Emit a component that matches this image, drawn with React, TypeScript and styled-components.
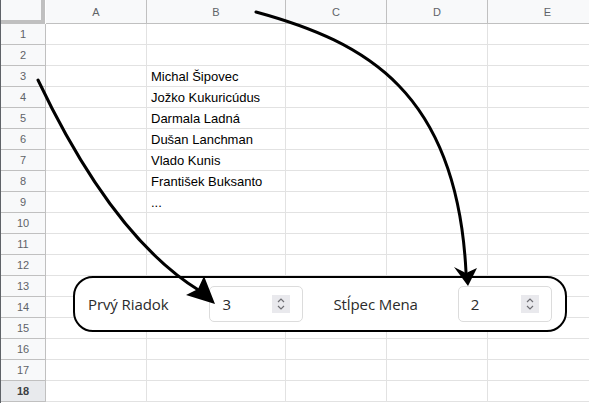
import React, { ReactElement } from 'react'
import styled, { createGlobalStyle } from 'styled-components'

const GlobalStyle = createGlobalStyle`
  html, body {
    margin: 0;
    padding: 0;
    background: #ffffff;
    overflow: hidden;
  }
`

const COLUMNS = ['A', 'B', 'C', 'D', 'E']
const ROW_COUNT = 18
const NAMES: Record<number, string> = {
  3: 'Michal Šipovec',
  4: 'Jožko Kukuricúdus',
  5: 'Darmala Ladná',
  6: 'Dušan Lanchman',
  7: 'Vlado Kunis',
  8: 'František Buksanto',
  9: '...',
}

const Stage = styled.div`
  position: relative;
  width: 589px;
  height: 403px;
  overflow: hidden;
  border-left: 1px solid #5f6368;
  box-sizing: border-box;
`

const Sheet = styled.div`
  display: grid;
  grid-template-columns: 45px 101px 139px 101px 101px 120px;
  grid-template-rows: 24px repeat(${ROW_COUNT}, 21px);
  font-family: 'Liberation Sans', Arial, sans-serif;
`

const Corner = styled.div`
  background: #f8f9fa;
  border-right: 4px solid #c0c0c0;
  border-bottom: 4px solid #c0c0c0;
  box-sizing: border-box;
  margin-right: 1px;
`

const ColHeader = styled.div`
  display: flex;
  align-items: center;
  justify-content: center;
  background: #f8f9fa;
  border-right: 1px solid #c0c0c0;
  border-bottom: 1px solid #c0c0c0;
  box-sizing: border-box;
  color: #5f6368;
  font-size: 11px;
`

const RowHeader = styled.div<{ $selected?: boolean }>`
  display: flex;
  align-items: center;
  justify-content: center;
  background: ${(p) => (p.$selected ? '#e8eaed' : '#f8f9fa')};
  border-right: 1px solid #c0c0c0;
  border-bottom: 1px solid #c0c0c0;
  box-sizing: border-box;
  color: ${(p) => (p.$selected ? '#3c4043' : '#5f6368')};
  font-size: 11px;
  font-weight: ${(p) => (p.$selected ? 700 : 400)};
`

const Cell = styled.div`
  display: flex;
  align-items: center;
  padding-left: 4px;
  border-right: 1px solid #e2e2e2;
  border-bottom: 1px solid #e2e2e2;
  box-sizing: border-box;
  font-size: 13px;
  color: #000000;
  white-space: nowrap;
  overflow: hidden;
`

const Panel = styled.div`
  position: absolute;
  left: 72px;
  top: 276px;
  width: 494px;
  height: 56px;
  box-sizing: border-box;
  border: 2px solid #000000;
  border-radius: 20px;
  background: #ffffff;
  display: flex;
  align-items: center;
  padding: 0 12px 0 13px;
  font-family: 'Open Sans', 'Noto Sans', sans-serif;
`

const Group = styled.div<{ $gap: number }>`
  display: flex;
  align-items: center;
  gap: ${(p) => p.$gap}px;
  & + & {
    margin-left: 30px;
  }
`

const Label = styled.span`
  font-size: 15px;
  color: #2b2b2b;
  letter-spacing: -0.1px;
`

const Field = styled.div`
  width: 94px;
  height: 36px;
  box-sizing: border-box;
  border: 1px solid #dcdcdc;
  border-radius: 5px;
  display: flex;
  align-items: center;
  justify-content: space-between;
  padding: 0 12px 0 12px;
  font-size: 15px;
  color: #2b2b2b;
`

const Spinner = styled.span`
  width: 18px;
  height: 18px;
  background: #e9e9ed;
  display: flex;
  align-items: center;
  justify-content: center;
`

const Overlay = styled.svg`
  position: absolute;
  left: 0;
  top: 0;
  pointer-events: none;
`

function SpinIcon(): ReactElement {
  return (
    <svg width="10" height="14" viewBox="0 0 10 14">
      <path d="M2 5 L5 2 L8 5" fill="none" stroke="#6e6e73" strokeWidth="1.2" />
      <path d="M2 9 L5 12 L8 9" fill="none" stroke="#6e6e73" strokeWidth="1.2" />
    </svg>
  )
}

type NumberFieldProps = {
  readonly label: string
  readonly value: number
  readonly gap: number
}

function NumberField({ label, value, gap }: NumberFieldProps): ReactElement {
  return (
    <Group $gap={gap}>
      <Label>{label}</Label>
      <Field>
        <span>{value}</span>
        <Spinner>
          <SpinIcon />
        </Spinner>
      </Field>
    </Group>
  )
}

function Arrows(): ReactElement {
  return (
    <Overlay width="589" height="403" viewBox="0 0 589 403">
      <path
        d="M37 80 Q 112 238 199 291"
        fill="none"
        stroke="#000"
        strokeWidth="3"
        strokeLinecap="round"
      />
      <polygon points="214,304 185,295 197,289 203,276" fill="#000" />
      <path
        d="M255 12 C 365 42, 456 92, 465 272"
        fill="none"
        stroke="#000"
        strokeWidth="3"
        strokeLinecap="round"
      />
      <polygon points="467,286 453,267 465,273 476,268" fill="#000" />
    </Overlay>
  )
}

export default function App(): ReactElement {
  const rows = Array.from({ length: ROW_COUNT }, (_, i) => i + 1)
  return (
    <>
      <GlobalStyle />
      <Stage>
        <Sheet>
          <Corner />
          {COLUMNS.map((c) => (
            <ColHeader key={c}>{c}</ColHeader>
          ))}
          {rows.map((r) => (
            <React.Fragment key={r}>
              <RowHeader $selected={r === ROW_COUNT}>{r}</RowHeader>
              {COLUMNS.map((c) => (
                <Cell key={c}>{c === 'B' ? NAMES[r] ?? '' : ''}</Cell>
              ))}
            </React.Fragment>
          ))}
        </Sheet>
        <Panel>
          <NumberField label="Prvý Riadok" value={3} gap={41} />
          <NumberField label="Stĺpec Mena" value={2} gap={40} />
        </Panel>
        <Arrows />
      </Stage>
    </>
  )
}
